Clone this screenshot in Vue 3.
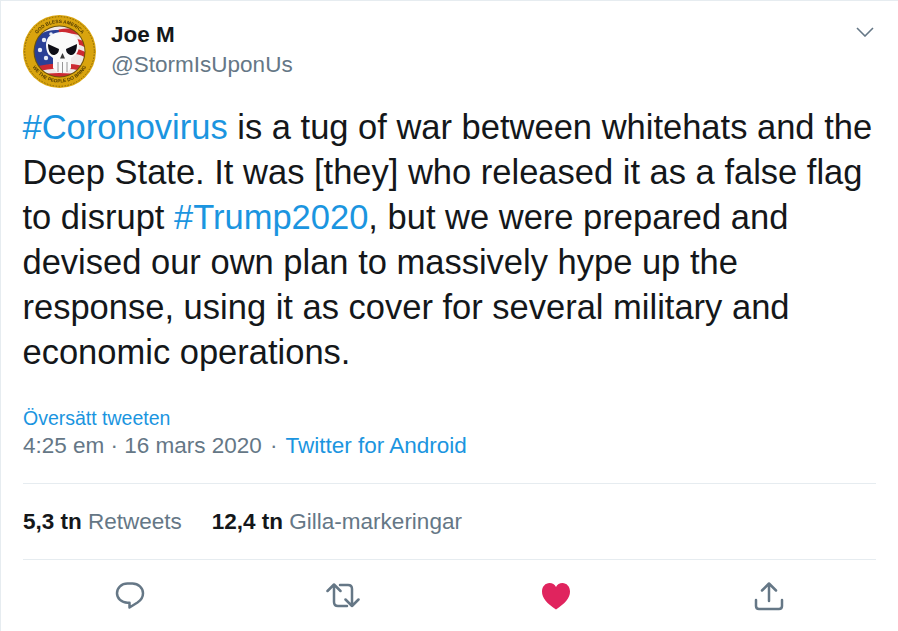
<template>
  <div class="tweet">
    <header class="head">
      <svg class="avatar" viewBox="0 0 73 73" width="73" height="73">
        <defs>
          <clipPath id="inner"><circle cx="36.5" cy="36.5" r="25" /></clipPath>
          <filter id="soft"><feGaussianBlur stdDeviation="0.45" /></filter>
          <filter id="softer"><feGaussianBlur stdDeviation="0.25" /></filter>
          <path id="arc-top" d="M8 36.500a28.500 28.500 0 0 1 57 0" />
          <path id="arc-bot" d="M5.500 36.500a31 31 0 0 0 62 0" />
        </defs>
        <circle cx="36.5" cy="36.5" r="36.500" fill="#d9a40e" />
        <circle cx="36.5" cy="36.5" r="34.800" fill="none" stroke="#7d5d08" stroke-width="0.9" stroke-dasharray="1.500 1.500" />
        <g filter="url(#softer)">
          <text class="ring"><textPath href="#arc-top" startOffset="50%" text-anchor="middle">GOD BLESS AMERICA</textPath></text>
          <text class="ring"><textPath href="#arc-bot" startOffset="50%" text-anchor="middle">WE THE PEOPLE DO BRING</textPath></text>
        </g>
        <circle cx="36.5" cy="36.5" r="26" fill="#6b5208" />
        <g clip-path="url(#inner)" filter="url(#soft)">
          <rect x="10" y="10" width="53" height="53" fill="#f0e8e8" />
          <path d="M11 24c8-8 16-9 25-9v34c-8 0-16 2-25 4z" fill="#2a3f96" />
          <path d="M36 17c10-2 18-1 27 3M40 27c8-2 16-1 23 3M40 37c8-2 16-1 23 3M10 55c18-5 36-5 53-1M14 62c14-2 30-2 45 0" fill="none" stroke="#cc2a33" stroke-width="5" />
          <circle cx="21" cy="25" r="2.200" fill="#e6ecf8" />
          <circle cx="17" cy="35" r="2.200" fill="#e6ecf8" />
          <circle cx="23" cy="43" r="2.200" fill="#e6ecf8" />
          <circle cx="28" cy="19" r="1.800" fill="#e6ecf8" />
        </g>
        <g filter="url(#soft)">
          <path d="M39 17c-10 0-16 5-16 13 0 4 1 7 2.500 9.500L30 43v10l4 4.500h10l4-4.500V43l5-3.500c2-2.500 3-5.500 3-9.500 0-8-7-13-17-13z" fill="#fafafa" />
          <path d="M25 29l11 5c0 3.500-2.500 6-5.500 6S25 36 25 29zM54 29l-11 5c0 3.500 2.500 6 5.500 6S54 36 54 29z" fill="#111116" />
          <path d="M39.500 38l-2.500 5.500h5z" fill="#3a3a3a" />
          <path d="M35 47v10M39.500 47v11M44 47v10" stroke="#8a8a8a" stroke-width="0.900" fill="none" />
        </g>
      </svg>
      <div class="who">
        <div class="name">Joe M</div>
        <div class="handle">@StormIsUponUs</div>
      </div>
      <svg class="caret" viewBox="0 0 18 10" width="18" height="10">
        <path d="M1 1l8 8 8-8" fill="none" stroke="#657786" stroke-width="1.600" />
      </svg>
    </header>

    <p class="body">
      <span class="link">#Coronovirus</span> is a tug of war between whitehats and the<br />
      Deep State. It was [they] who released it as a false flag<br />
      to disrupt <span class="link">#Trump2020</span>, but we were prepared and<br />
      devised our own plan to massively hype up the<br />
      response, using it as cover for several military and<br />
      economic operations.
    </p>

    <div class="translate link">Översätt tweeten</div>
    <div class="meta">4:25 em · 16 mars 2020<span class="sep">·</span><span class="link">Twitter for Android</span></div>

    <div class="stats">
      <span v-for="s in stats" :key="s.label" class="stat"><b>{{ s.value }}</b> {{ s.label }}</span>
    </div>

    <div class="actions">
      <svg viewBox="0 0 30 30" width="30" height="30">
        <path d="M12.500 2.500h5c5.800 0 10.500 4.400 10.500 9.700 0 4-2.500 7.300-5.500 9.300l-8 5v-4.800h-2C6.500 21.700 2 17.500 2 12.200 2 6.800 6.500 2.500 12.500 2.500z" class="stroke" />
      </svg>
      <svg viewBox="0 0 34 26" width="34" height="26">
        <path d="M1.500 8L8 1.500 14.500 8M8 2v17c0 2.500 1.700 4 4 4h9M32.500 16.500L26 23l-6.500-6.500M26 23V6c0-2.500-1.700-4-4-4h-8" class="stroke" />
      </svg>
      <svg viewBox="0 0 30 30" width="30" height="30">
        <path d="M15 28.500C6 22.500 1 17 1 10.500 1 5.500 4.500 2 8.500 2c3 0 5.200 1.500 6.500 4 1.300-2.500 3.500-4 6.500-4C25.500 2 29 5.500 29 10.500c0 6.500-5 12-14 18z" fill="#e0245e" />
      </svg>
      <svg viewBox="0 0 30 30" width="30" height="30">
        <path d="M15 20V3M8 9.500L15 2.500l7 7M2 19v6c0 2 1.300 3 3 3h20c1.700 0 3-1 3-3v-6" class="stroke" />
      </svg>
    </div>
  </div>
</template>

<script setup>
const stats = [
  { value: "5,3 tn", label: "Retweets" },
  { value: "12,4 tn", label: "Gilla-markeringar" }
];
</script>

<style>
html, body { margin: 0; background: #fff; overflow: hidden; }
</style>

<style scoped>
.tweet {
  width: 898px;
  height: 631px;
  box-sizing: border-box;
  border-top: 1px solid #e6ecf0;
  border-left: 1px solid #e6ecf0;
  padding: 14px 22px 0 22px;
  font-family: "Liberation Sans", Arial, sans-serif;
  color: #14171a;
  background: #fff;
  overflow: hidden;
}
.head {
  display: flex;
  align-items: flex-start;
  height: 73px;
}
.avatar { flex: none; display: block; }
.ring { font-size: 4.800px; font-weight: 700; fill: #4f3a05; }
.who { margin-left: 15px; padding-top: 6px; flex: 1; }
.name { font-size: 22.5px; font-weight: 700; line-height: 27px; }
.handle { font-size: 22.5px; line-height: 33px; color: #657786; }
.caret { margin-top: 12px; margin-right: 2px; flex: none; }
.body {
  margin: 17px 0 0 -0.5px;
  font-size: 34.5px;
  line-height: 45px;
  white-space: nowrap;
}
.link { color: #1b95e0; }
.translate { margin-top: 31px; font-size: 19.5px; line-height: 24px; }
.meta { margin-top: 1px; font-size: 22.5px; line-height: 30px; color: #657786; }
.sep { margin: 0 8px; }
.stats {
  margin-top: 22px;
  border-top: 1px solid #e6ecf0;
  border-bottom: 1px solid #e6ecf0;
  height: 75px;
  display: flex;
  align-items: center;
  gap: 30px;
  font-size: 22.5px;
  color: #657786;
}
.stat b { color: #14171a; }
.actions {
  display: grid;
  grid-template-columns: repeat(4, 1fr);
  justify-items: center;
  align-items: center;
  padding: 21px 1px 0 0;
}
.stroke {
  fill: none;
  stroke: #657786;
  stroke-width: 2.500;
  stroke-linecap: round;
  stroke-linejoin: round;
}
</style>
